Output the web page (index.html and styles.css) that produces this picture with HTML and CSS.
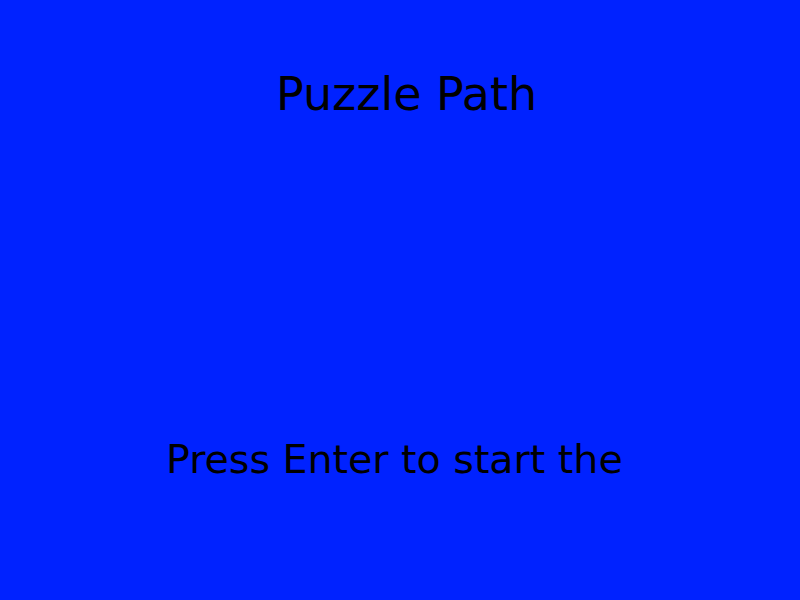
FILE: index.html
```html
<!DOCTYPE html>
<html>
<head>
<meta charset="utf-8">
<link rel="stylesheet" href="styles.css">
</head>
<body>
<div class="screen">
  <h1 class="title">Puzzle Path</h1>
  <p class="prompt">Press Enter to start the</p>
</div>
</body>
</html>
```
FILE: styles.css
```css
html, body {
  margin: 0;
  padding: 0;
  background: #0022ff;
}
.screen {
  width: 800px;
  height: 600px;
  overflow: hidden;
  background: #0022ff;
  font-family: "DejaVu Sans", sans-serif;
  color: #000;
}
.title {
  margin: 71px 0 0 276px;
  font-size: 46px;
  line-height: 46px;
  font-weight: normal;
  white-space: nowrap;
}
.prompt {
  margin: 322px 0 0 166px;
  font-size: 39.5px;
  line-height: 40px;
  white-space: nowrap;
}
```
